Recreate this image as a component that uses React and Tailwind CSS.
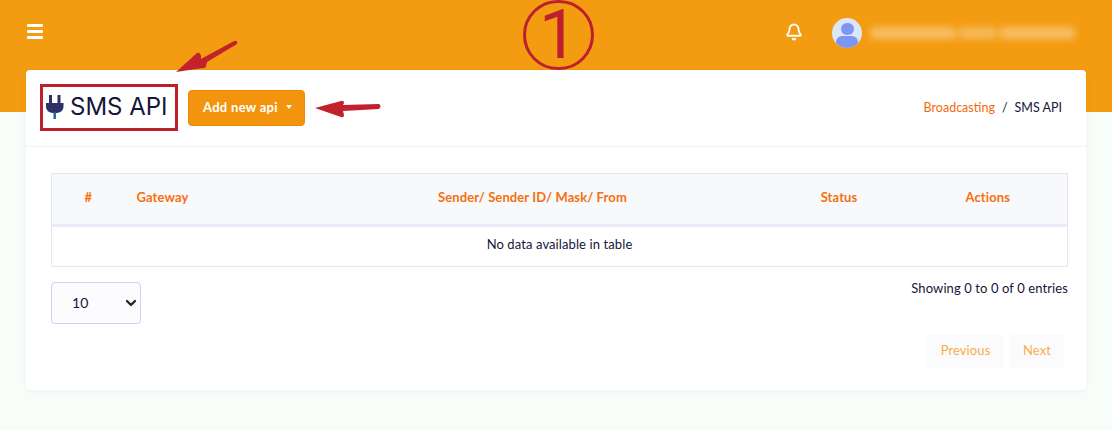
import React from 'react';
import { Bell, ChevronDown } from 'lucide-react';

const PlugIcon = () => (
  <svg width="18" height="24" viewBox="0 0 18 24" className="shrink-0">
    <path d="M3 0h3v8H3zM11.500 0h3v8h-3z" fill="#2d3166" />
    <path d="M0 8h17.500v3.500c0 3.600-2.600 6-6.700 6.600H6.700C2.600 17.500 0 15.100 0 11.500z" fill="#2d3166" />
    <rect x="7.500" y="17" width="2.400" height="7" fill="#1e5f9e" />
  </svg>
);

const Arrow = ({ className, d }) => (
  <svg className={`absolute ${className}`} width="80" height="40" viewBox="0 0 80 40">
    <path d={d} fill="#c1222c" />
  </svg>
);

const App = () => {
  return (
    <div className="relative h-[430px] overflow-hidden bg-[#f8fdf9] text-[13px] tracking-[0.1px] text-[#14163a] font-['Lato','Noto_Sans',sans-serif]">

      {/* Top bar */}
      <div className="h-[112px] bg-[#f39c12] flex items-start justify-between pl-[27px] pr-[37px] pt-[18px] text-white">
        <div className="flex flex-col gap-[3px] w-[16px] mt-[6px]">
          <div className="h-[3px] bg-white rounded-[1px]" />
          <div className="h-[3px] bg-white rounded-[1px]" />
          <div className="h-[3px] bg-white rounded-[1px]" />
        </div>
        <div className="flex items-center h-[30px]">
          <Bell size={18} strokeWidth={2.5} className="mr-[29px] mb-[2px]" />
          <div className="w-[30px] h-[30px] rounded-full bg-[#dbe6f8] overflow-hidden flex flex-col items-center mr-[8px]">
            <div className="w-[13px] h-[14px] rounded-full bg-[#7f95f5] mt-[5px]" />
            <div className="w-[22px] h-[14px] rounded-full bg-[#7f95f5] mt-[1px]" />
          </div>
          <div className="w-[205px] flex gap-[3px] mb-[1px] blur-[3.5px]">
            <div className="w-[86px] h-[12px] bg-white/35 rounded-sm" />
            <div className="w-[38px] h-[12px] bg-white/30 rounded-sm" />
            <div className="w-[75px] h-[12px] bg-white/35 rounded-sm" />
          </div>
        </div>
      </div>

      {/* Main card */}
      <div className="relative mx-[26px] mt-[-42px] h-[320px] bg-white rounded-[4px] shadow-[0_1px_6px_rgba(20,40,30,0.05)]">
        <div className="h-[77px] border-b border-[#f1f2f5] flex items-center pl-[14px] pr-[20px]">
          <div className="h-[47px] w-[138px] border-[3px] border-[#bd1f2d] flex items-center gap-[6px] pl-[3px] mt-[-2px]">
            <PlugIcon />
            <span className="text-[24px] leading-none tracking-normal text-[#14163a] font-['Inter',sans-serif] font-normal whitespace-nowrap">SMS API</span>
          </div>
          <button className="ml-[10px] mt-[-1px] w-[117px] h-[36px] pl-[14px] bg-[#f3940f] border border-[#ee8a05] rounded-[4px] text-white text-[13px] font-bold flex items-center gap-[8px] tracking-[0.3px]">
            Add new api
            <span className="border-x-[3.5px] border-x-transparent border-t-[4px] border-t-white mb-[2px]" />
          </button>
          <div className="ml-auto mr-[4px] flex items-center text-[12.5px] tracking-normal">
            <span className="text-[#ef6b10]">Broadcasting</span>
            <span className="mx-[7px]">/</span>
            <span>SMS API</span>
          </div>
        </div>

        <div className="pt-[26px] pl-[25px]">
          <table className="w-[1016px] table-fixed border border-[#e4e6f3] border-collapse text-center">
            <colgroup>
              <col className="w-[73px]" />
              <col className="w-[171px]" />
              <col className="w-[474px]" />
              <col className="w-[139px]" />
              <col className="w-[159px]" />
            </colgroup>
            <thead>
              <tr className="h-[52px] bg-[#f8f9fb] border-b-[3px] border-[#e8eaf6] text-[#f5700f]">
                <th className="font-bold pb-[2px]">#</th>
                <th className="font-bold text-left pl-[12px] pb-[2px]">Gateway</th>
                <th className="font-bold pb-[2px]">Sender/ Sender ID/ Mask/ From</th>
                <th className="font-bold pb-[2px]">Status</th>
                <th className="font-bold pb-[2px]">Actions</th>
              </tr>
            </thead>
            <tbody>
              <tr className="h-[41px]">
                <td colSpan={5} className="pb-[3px]">No data available in table</td>
              </tr>
            </tbody>
          </table>

          <div className="flex justify-between items-start mt-[15px] w-[1017px]">
            <div className="relative w-[90px] h-[42px]">
              <select className="appearance-none w-full h-full pl-[20px] pb-[2px] bg-[#fcfcff] border border-[#ccd0f7] rounded-[4px] text-[14px] text-[#14163a]">
                <option>10</option>
              </select>
              <ChevronDown size={16} strokeWidth={3.5} className="absolute left-[72px] top-[13px] text-[#23252f] pointer-events-none" />
            </div>
            <div className="mt-[-3px]">Showing 0 to 0 of 0 entries</div>
          </div>

          <div className="flex justify-end gap-[6px] w-[1013px] mt-[10px] text-[#f9ad45]">
            <div className="w-[77px] h-[34px] bg-[#fbfbfe] rounded-[3px] flex items-center justify-center">Previous</div>
            <div className="w-[54px] h-[34px] bg-[#fbfbfe] rounded-[3px] flex items-center justify-center">Next</div>
          </div>
        </div>
      </div>

      {/* Hand drawn annotations on top of the page */}
      <div className="absolute left-[523px] top-0 w-[71px] h-[70px] rounded-full border-[3px] border-[#bd1f2d] flex items-center justify-center text-[69px] leading-[64px] font-normal text-[#bd1f2d] font-['Roboto',sans-serif]">
        1
      </div>
      <Arrow className="left-[170px] top-[38px]" d="M6 34 L27 15 Q30 14 31 18 L31 21 L64 3 Q68 2 67 6 L37 24 L36 28 Q36 30 33 30 Z" />
      <Arrow className="left-[310px] top-[88px]" d="M5 20 L31 13 Q34 12 34 15 L33 17 L69 16 Q72 18 69 21 L33 23 L34 27 Q34 30 31 29 Z" />
    </div>
  );
};

export default App;
